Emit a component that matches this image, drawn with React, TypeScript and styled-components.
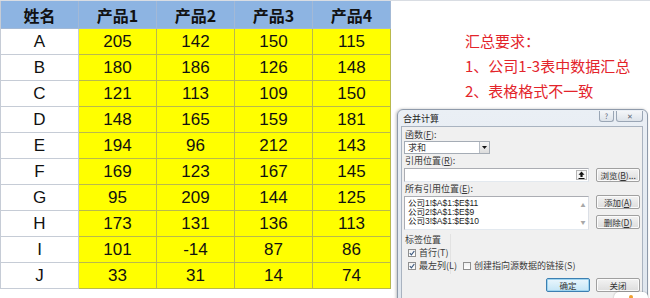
import React from 'react';
import styled, { createGlobalStyle } from 'styled-components';

const GlobalStyle = createGlobalStyle`
  html, body {
    margin: 0;
    padding: 0;
    background: #fff;
  }
  body {
    width: 650px;
    height: 298px;
    overflow: hidden;
    font-family: 'Liberation Sans', 'Noto Sans CJK SC', sans-serif;
  }
`;

const Page = styled.div`
  position: relative;
  width: 650px;
  height: 298px;
  display: flex;
  align-items: flex-start;
  border-top: 1px solid #d9dde3;
  box-sizing: border-box;
  overflow: hidden;
`;

const Sheet = styled.div`
  display: grid;
  grid-template-columns: repeat(5, 78px);
  grid-template-rows: 28px repeat(10, 26px);
  border-left: 1px solid #c6ccd6;
`;

const Cell = styled.div<{ $kind: 'head' | 'name' | 'value' }>`
  display: flex;
  align-items: center;
  justify-content: center;
  box-sizing: border-box;
  border-right: 1px solid ${({ $kind }) => ($kind === 'value' ? '#b9b94c' : $kind === 'head' ? '#a3b9d6' : '#c6ccd6')};
  border-bottom: 1px solid ${({ $kind }) => ($kind === 'value' ? '#b9b94c' : $kind === 'head' ? '#a3b9d6' : '#c6ccd6')};
  background: ${({ $kind }) => ($kind === 'head' ? '#8db4e2' : $kind === 'value' ? '#ffff00' : '#fff')};
  color: #111;
  font-family: ${({ $kind }) => ($kind === 'head' ? "'Noto Sans CJK SC', sans-serif" : "'Liberation Sans', 'Noto Sans CJK SC', sans-serif")};
  font-size: ${({ $kind }) => ($kind === 'head' ? '16px' : '17px')};
  font-weight: ${({ $kind }) => ($kind === 'head' ? 700 : 400)};
`;

const Notes = styled.div`
  margin: 27px 0 0 74px;
  color: #e3242b;
  font-family: 'Noto Sans CJK SC', sans-serif;
  font-size: 15px;
  line-height: 25px;
`;

const Dialog = styled.div`
  position: absolute;
  left: 397px;
  top: 108px;
  width: 251px;
  height: 200px;
  box-sizing: border-box;
  border: 1px solid #8e9aaa;
  border-radius: 6px 6px 0 0;
  background: linear-gradient(#eaeff5, #dfe6ee);
  box-shadow: -1px 0 3px rgba(0, 0, 0, 0.25);
  font-family: 'Noto Sans CJK SC', sans-serif;
  font-size: 9px;
  color: #3a3a3a;
`;

const TitleBar = styled.div`
  height: 16px;
  display: flex;
  align-items: center;
  padding-left: 5px;
  color: #222;
`;

const TitleButtons = styled.div`
  margin-left: auto;
  margin-right: 4px;
  margin-top: -4px;
  display: flex;
  gap: 2px;
`;

const FrameButton = styled.div<{ $w: number }>`
  width: ${({ $w }) => $w}px;
  height: 11px;
  box-sizing: border-box;
  border: 1px solid #9aa6b5;
  border-top: none;
  border-radius: 0 0 3px 3px;
  background: linear-gradient(#f4f6f9, #dde3ea);
  display: flex;
  align-items: center;
  justify-content: center;
  font-size: 7px;
  color: #5b6573;
`;

const Client = styled.div`
  margin: 0 4px 0 3px;
  height: 190px;
  box-sizing: border-box;
  border: 1px solid #a9b3c0;
  background: #f0f0f0;
  padding: 2px 2px 0 2px;
  display: flex;
  flex-direction: column;
`;

const Label = styled.div<{ $h?: number }>`
  height: ${({ $h }) => $h ?? 13}px;
  line-height: ${({ $h }) => $h ?? 13}px;
  padding-left: 1px;
  white-space: nowrap;
`;

const Select = styled.div`
  width: 86px;
  height: 13px;
  box-sizing: border-box;
  border: 1px solid #a5acb5;
  background: #fff;
  display: flex;
  align-items: center;
  padding-left: 3px;
`;

const DropButton = styled.div`
  margin-left: auto;
  width: 10px;
  height: 11px;
  box-sizing: border-box;
  border-left: 1px solid #b8bec6;
  background: linear-gradient(#f6f6f6, #dcdcdc);
  display: flex;
  align-items: center;
  justify-content: center;
`;

const Row = styled.div<{ $mt?: number }>`
  display: flex;
  gap: 7px;
  margin-top: ${({ $mt }) => $mt ?? 0}px;
`;

const Field = styled.div<{ $h: number }>`
  width: 186px;
  height: ${({ $h }) => $h}px;
  box-sizing: border-box;
  border: 1px solid #abadb3;
  border-bottom-color: #e3e9ef;
  border-right-color: #dbdfe6;
  background: #fff;
  display: flex;
`;

const PickButton = styled.div`
  margin: 1px 1px 1px auto;
  width: 11px;
  box-sizing: border-box;
  border: 1px solid #b5b5b5;
  background: #f4f4f4;
  display: flex;
  align-items: center;
  justify-content: center;
`;

const RefList = styled.div`
  flex: 1;
  padding: 2px 0 0 3px;
  line-height: 9px;
  font-size: 8.5px;
  color: #222;
  font-family: 'Liberation Sans', 'Noto Sans CJK SC', sans-serif;
`;

const ScrollTrack = styled.div`
  width: 10px;
  display: flex;
  flex-direction: column;
  justify-content: space-between;
  align-items: center;
  padding: 4px 0;
  color: #a8a8a8;
  font-size: 5px;
`;

const ButtonColumn = styled.div`
  display: flex;
  flex-direction: column;
  gap: 6px;
  margin-top: -1px;
`;

const Button = styled.div<{ $primary?: boolean }>`
  width: 44px;
  height: 14px;
  box-sizing: border-box;
  border: 1px solid ${({ $primary }) => ($primary ? '#3c7fb1' : '#a0a0a0')};
  border-radius: 2px;
  background: ${({ $primary }) => ($primary ? 'linear-gradient(#eaf6fd, #c4e5f6)' : 'linear-gradient(#f3f3f3, #dddddd)')};
  box-shadow: inset 0 0 0 1px ${({ $primary }) => ($primary ? '#9ed4f0' : '#fbfbfb')};
  display: flex;
  align-items: center;
  justify-content: center;
  font-size: 8.5px;
  color: #333;
  white-space: nowrap;
`;

const Group = styled.div`
  margin-top: 4px;
  display: flex;
  align-items: flex-end;
  gap: 8px;
`;

const GroupBox = styled.div`
  width: 46px;
  padding: 0 0 2px 0;
  border-right: 1px solid #e2e2e2;
`;

const CheckRow = styled.label`
  height: 13px;
  display: flex;
  align-items: center;
  gap: 3px;
  padding-left: 4px;
  white-space: nowrap;
`;

const Box = styled.span`
  width: 8px;
  height: 8px;
  box-sizing: border-box;
  border: 1px solid #8f8f8f;
  background: linear-gradient(#f0f0f0, #ffffff);
  display: flex;
  align-items: center;
  justify-content: center;
`;

const Footer = styled.div`
  margin-top: 4px;
  display: flex;
  justify-content: flex-end;
  gap: 6px;
`;

const Badge = styled.div`
  position: absolute;
  left: 614px;
  top: 291px;
  width: 34px;
  height: 10px;
  border-radius: 5px 5px 0 0;
  background: #fff;
  box-shadow: 0 0 2px rgba(0, 0, 0, 0.3);
  display: flex;
  justify-content: center;
  padding-top: 3px;
  box-sizing: border-box;
`;

const Dot = styled.span`
  width: 4px;
  height: 4px;
  border-radius: 50%;
  background: #f0a030;
`;

const names = ['A', 'B', 'C', 'D', 'E', 'F', 'G', 'H', 'I', 'J'];
const values = [
  [205, 142, 150, 115],
  [180, 186, 126, 148],
  [121, 113, 109, 150],
  [148, 165, 159, 181],
  [194, 96, 212, 143],
  [169, 123, 167, 145],
  [95, 209, 144, 125],
  [173, 131, 136, 113],
  [101, -14, 87, 86],
  [33, 31, 14, 74],
];

function Check({ checked, label }: { checked: boolean; label: string }) {
  return (
    <CheckRow>
      <Box>
        {checked && (
          <svg width="6" height="6" viewBox="0 0 6 6">
            <path d="M0.8 3.2 L2.4 4.8 L5.3 1" stroke="#3d5a80" strokeWidth="1.2" fill="none" />
          </svg>
        )}
      </Box>
      {label}
    </CheckRow>
  );
}

export default function App() {
  return (
    <>
      <GlobalStyle />
      <Page>
        <Sheet>
          {['姓名', '产品1', '产品2', '产品3', '产品4'].map((h) => (
            <Cell key={h} $kind="head">{h}</Cell>
          ))}
          {names.map((n, i) => (
            <React.Fragment key={n}>
              <Cell $kind="name">{n}</Cell>
              {values[i].map((v, j) => (
                <Cell key={j} $kind="value">{v}</Cell>
              ))}
            </React.Fragment>
          ))}
        </Sheet>
        <Notes>
          <div>汇总要求：</div>
          <div>1、公司1-3表中数据汇总</div>
          <div>2、表格格式不一致</div>
        </Notes>

        <Dialog>
          <TitleBar>
            合并计算
            <TitleButtons>
              <FrameButton $w={15}>?</FrameButton>
              <FrameButton $w={27}>✕</FrameButton>
            </TitleButtons>
          </TitleBar>
          <Client>
            <Label $h={12}>函数(<u>F</u>):</Label>
            <Select>
              求和
              <DropButton>
                <svg width="5" height="3" viewBox="0 0 5 3">
                  <path d="M0 0 H5 L2.5 3 Z" fill="#111" />
                </svg>
              </DropButton>
            </Select>
            <Label>引用位置(<u>R</u>):</Label>
            <Row $mt={1}>
              <Field $h={14}>
                <PickButton>
                  <svg width="7" height="8" viewBox="0 0 7 8">
                    <path d="M3.5 0.5 L6.5 3.8 H4.6 V6 H2.4 V3.8 H0.5 Z" fill="#111" />
                    <rect x="0.5" y="7" width="6" height="1" fill="#111" />
                  </svg>
                </PickButton>
              </Field>
              <Button>浏览(<u>B</u>)...</Button>
            </Row>
            <Label>所有引用位置(<u>E</u>):</Label>
            <Row $mt={1}>
              <Field $h={34}>
                <RefList>
                  <div>公司1!$A$1:$E$11</div>
                  <div>公司2!$A$1:$E$9</div>
                  <div>公司3!$A$1:$E$10</div>
                </RefList>
                <ScrollTrack>
                  <span>▲</span>
                  <span>▼</span>
                </ScrollTrack>
              </Field>
              <ButtonColumn>
                <Button>添加(<u>A</u>)</Button>
                <Button>删除(<u>D</u>)</Button>
              </ButtonColumn>
            </Row>
            <Group>
              <GroupBox>
                <Label $h={12}>标签位置</Label>
                <Check checked label="首行(T)" />
                <Check checked label="最左列(L)" />
              </GroupBox>
              <div style={{ paddingBottom: 2 }}>
                <Check checked={false} label="创建指向源数据的链接(S)" />
              </div>
            </Group>
            <Footer>
              <Button $primary>确定</Button>
              <Button>关闭</Button>
            </Footer>
          </Client>
        </Dialog>
        <Badge>
          <Dot />
        </Badge>
      </Page>
    </>
  );
}
